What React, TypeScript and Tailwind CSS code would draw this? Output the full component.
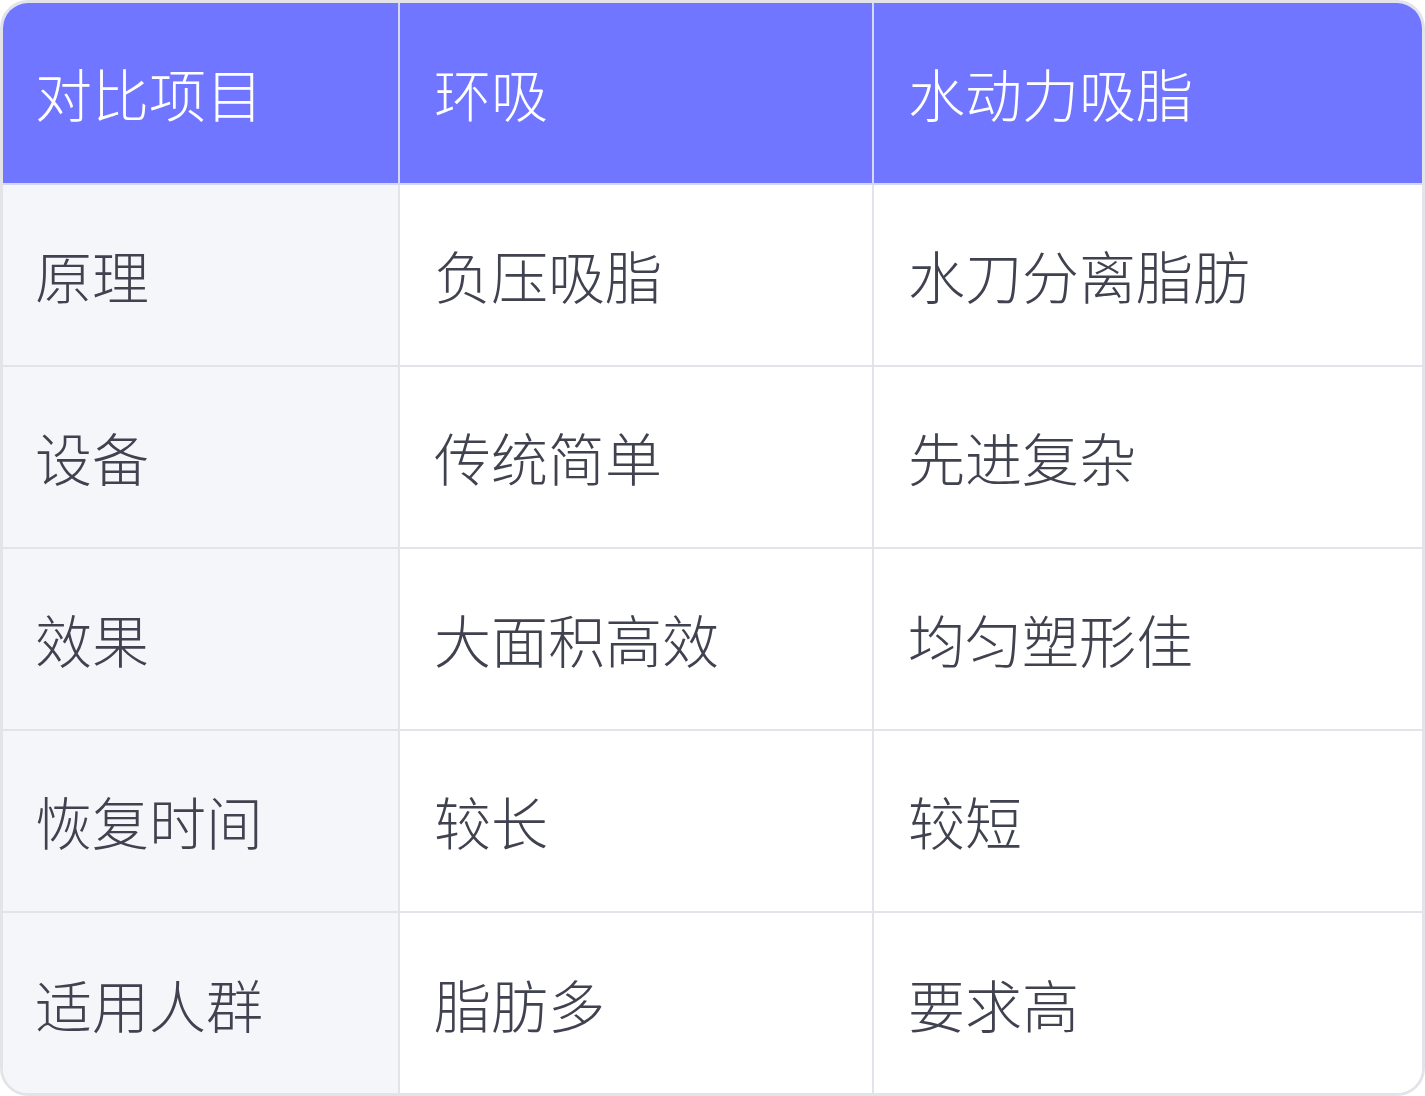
import React from "react";

const rows: [string, string, string][] = [
  ["原理", "负压吸脂", "水刀分离脂肪"],
  ["设备", "传统简单", "先进复杂"],
  ["效果", "大面积高效", "均匀塑形佳"],
  ["恢复时间", "较长", "较短"],
  ["适用人群", "脂肪多", "要求高"],
];

export default function App() {
  return (
    <div
      className="w-[1425px] h-[1096px] bg-white"
      style={{ fontFamily: '"Noto Sans CJK SC", "Noto Sans", sans-serif' }}
    >
      <div className="w-full h-full rounded-[28px] border-[3px] border-[#e2e4ea] overflow-hidden">
        <table className="w-full h-full border-collapse table-fixed">
          <colgroup>
            <col className="w-[396px]" />
            <col className="w-[474px]" />
            <col />
          </colgroup>
          <thead>
            <tr className="h-[181px] bg-[#7076ff] text-white">
              <th className="text-left font-light text-[57px] pl-[32px] border-r-[2px] border-b-[2px] border-[#d4d7f5]">对比项目</th>
              <th className="text-left font-light text-[57px] pl-[34px] border-r-[2px] border-b-[2px] border-[#d4d7f5]">环吸</th>
              <th className="text-left font-light text-[57px] pl-[34px] border-b-[2px] border-[#d4d7f5]">水动力吸脂</th>
            </tr>
          </thead>
          <tbody>
            {rows.map((r, i) => (
              <tr key={i} className="h-[182px] text-[#40424f] font-light">
                <td className={`bg-[#f5f6fa] text-[57px] pl-[32px] border-r-[2px] border-[#e2e4ea] ${i < rows.length - 1 ? "border-b-[2px]" : ""}`}>{r[0]}</td>
                <td className={`bg-white text-[57px] pl-[34px] border-r-[2px] border-[#e2e4ea] ${i < rows.length - 1 ? "border-b-[2px]" : ""}`}>{r[1]}</td>
                <td className={`bg-white text-[57px] pl-[34px] border-[#e2e4ea] ${i < rows.length - 1 ? "border-b-[2px]" : ""}`}>{r[2]}</td>
              </tr>
            ))}
          </tbody>
        </table>
      </div>
    </div>
  );
}
